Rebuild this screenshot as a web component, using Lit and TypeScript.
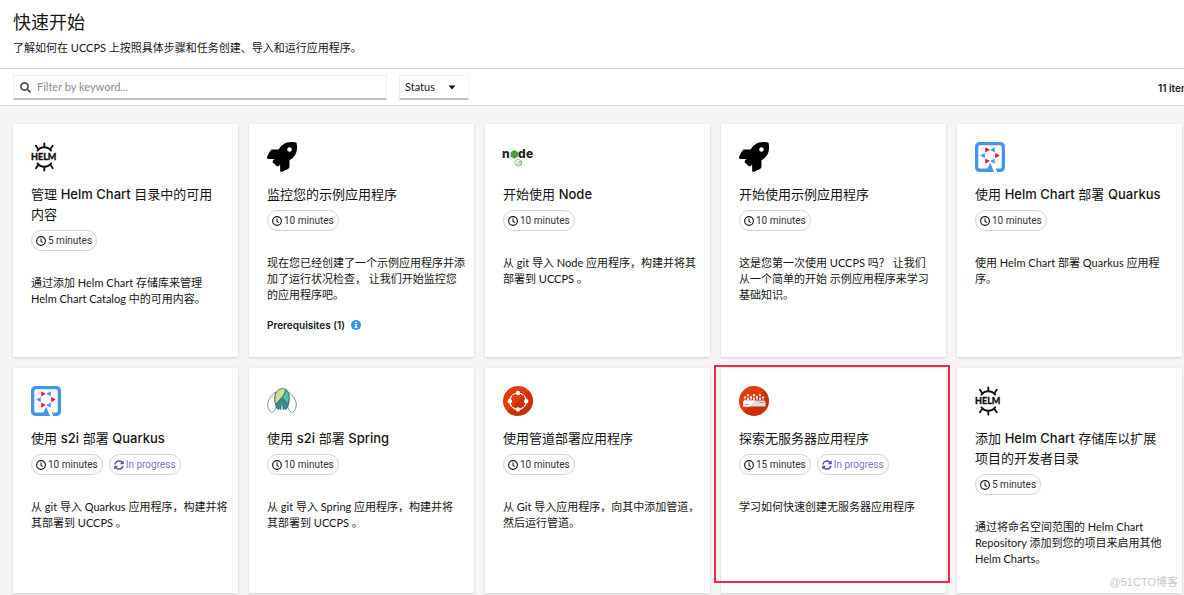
import { LitElement, html, css, svg, nothing } from "lit";
import { customElement, property } from "lit/decorators.js";

type IconName = "helm" | "rocket" | "node" | "quarkus" | "spring" | "pipeline" | "serverless";

interface QuickStart {
  icon: IconName;
  title: string;
  minutes: number;
  description: string;
  inProgress?: boolean;
  prerequisites?: number;
  marked?: boolean;
}

const quickStarts: QuickStart[] = [
  { icon: "helm", title: "管理 Helm Chart 目录中的可用\n内容", minutes: 5, description: "通过添加 Helm Chart 存储库来管理\nHelm Chart Catalog 中的可用内容。" },
  { icon: "rocket", title: "监控您的示例应用程序", minutes: 10, description: "现在您已经创建了一个示例应用程序并添\n加了运行状况检查， 让我们开始监控您\n的应用程序吧。", prerequisites: 1 },
  { icon: "node", title: "开始使用 Node", minutes: 10, description: "从 git 导入 Node 应用程序，构建并将其\n部署到 UCCPS 。" },
  { icon: "rocket", title: "开始使用示例应用程序", minutes: 10, description: "这是您第一次使用 UCCPS 吗？ 让我们\n从一个简单的开始 示例应用程序来学习\n基础知识。" },
  { icon: "quarkus", title: "使用 Helm Chart 部署 Quarkus", minutes: 10, description: "使用 Helm Chart 部署 Quarkus 应用程\n序。" },
  { icon: "quarkus", title: "使用 s2i 部署 Quarkus", minutes: 10, description: "从 git 导入 Quarkus 应用程序，构建并将\n其部署到 UCCPS 。", inProgress: true },
  { icon: "spring", title: "使用 s2i 部署 Spring", minutes: 10, description: "从 git 导入 Spring 应用程序，构建并将\n其部署到 UCCPS 。" },
  { icon: "pipeline", title: "使用管道部署应用程序", minutes: 10, description: "从 Git 导入应用程序，向其中添加管道，\n然后运行管道。" },
  { icon: "serverless", title: "探索无服务器应用程序", minutes: 15, description: "学习如何快速创建无服务器应用程序", inProgress: true, marked: true },
  { icon: "helm", title: "添加 Helm Chart 存储库以扩展\n项目的开发者目录", minutes: 5, description: "通过将命名空间范围的 Helm Chart\nRepository 添加到您的项目来启用其他\nHelm Charts。" },
];

const helmWheel = (transform: string) => svg`<path transform=${transform} d="M6.500 8.600C8 6.400 10.500 5.200 13.300 5.200S18.600 6.400 20.100 8.600M13.300 1.400V5M4.900 3.800L7.300 7.300M21.700 3.800L19.300 7.300" fill="none" stroke="#111" stroke-width="1.900" stroke-linecap="round"/>`;

const pipelineDots = [[15, 7], [15, 23.4], [6.8, 15.2], [23.2, 15.2]];
const serverlessTrees = [9, 15, 21];

const icons: Record<IconName, unknown> = {
  helm: svg`
    ${helmWheel("translate(0 0)")}
    ${helmWheel("translate(0 30) scale(1 -1)")}
    <text x="0" y="18" font-size="9" font-weight="900" font-family="Lato, sans-serif" fill="#111" stroke="#111" stroke-width=".3">HELM</text>`,
  rocket: svg`<path transform="scale(.0586)" d="M505.12 19.094c-1.189-5.531-6.658-11-12.207-12.188C460.716 0 435.507 0 410.407 0 307.175 0 245.269 55.203 199.052 128H94.838c-16.348.016-35.557 11.875-42.887 26.484L2.516 253.297A28.4 28.4 0 0 0 0 264a24.009 24.009 0 0 0 24.006 24H127.816l-22.475 22.469c-11.365 11.361-12.996 32.258 0 45.25L156.246 406.625c11.156 11.188 32.156 13.156 45.277 0l22.475-22.469V488a24.009 24.009 0 0 0 24.006 24 28.559 28.559 0 0 0 10.707-2.516l98.728-49.39c14.629-7.297 26.508-26.5 26.508-42.86V312.797c72.598-46.313 128.035-108.406 128.035-211.094C512.075 76.5 512.075 51.297 505.12 19.094ZM384.04 168A40 40 0 1 1 424.05 128 40.023 40.023 0 0 1 384.04 168Z"/>`,
  node: svg`
    <g font-family="Inter, sans-serif" font-weight="800" font-size="12" fill="#222">
      <text x="-1" y="16">n</text><text x="15" y="16">d</text><text x="23" y="16">e</text>
    </g>
    <path d="M11.400 8L15.200 10.200V14.600L11.400 16.800L7.600 14.600V10.200Z" fill="#4a9f3c"/>
    <path d="M15.300 17.200L18.500 19V22.600L15.300 24.400L12.100 22.600V19Z" fill="none" stroke="#7fb974" stroke-width=".8"/>
    <text x="13" y="23" font-family="Roboto, sans-serif" font-size="5" fill="#5fa853">JS</text>`,
  quarkus: svg`
    <path fill-rule="evenodd" fill="#4695eb" d="M4.500 0H25.500A4.500 4.500 0 0 1 30 4.500V25.500A4.500 4.500 0 0 1 25.500 30H22.300L20.700 26.600H25A1.800 1.800 0 0 0 26.700 25V5A1.800 1.800 0 0 0 25 3.300H5A1.800 1.800 0 0 0 3.300 5V25A1.800 1.800 0 0 0 5 26.600H12.300L15.200 20.800L19 30H4.500A4.500 4.500 0 0 1 0 25.500V4.500A4.500 4.500 0 0 1 4.500 0Z"/>
    <path fill="#ff004a" d="M10.300 5.200V10.400L14.800 7.800ZM20.200 11V16.200L24.700 13.600ZM10.300 16.500V21.700L14.800 19.100Z"/>
    <path fill="#4695eb" d="M19.700 5.200V10.400L15.200 7.800ZM9.800 11V16.200L5.300 13.600ZM19.700 16.500V21.700L15.200 19.100Z"/>`,
  spring: svg`
    <path fill="#fff" stroke="#5f8f8b" stroke-width=".9" d="M8.600 6C4.500 9 .8 14 .7 18.500C.6 22 3 26.500 4.700 26.500C6.500 26.500 9.300 22.500 9.300 20C7.500 16 7.500 10 8.600 6ZM21.400 6C25.500 9 29.200 14 29.300 18.500C29.400 22 27 26.500 25.300 26.500C23.500 26.500 20.700 22.500 20.700 20C22.500 16 22.500 10 21.400 6Z"/>
    <path fill="#d5dc96" stroke="#2f5f63" stroke-width=".8" d="M18.800 3.300C13 1 8 4.500 7.900 12.500C7.900 15 8.200 17 8.700 18.500L15 11.500C17 9 18.300 6.500 18.800 3.300Z"/>
    <path fill="#4fc0a5" stroke="#2f5f63" stroke-width=".8" d="M18.800 3.300C21.500 5 22.500 9.500 22.100 13.500C22 15.500 21.700 17.300 21.200 18.800L15 11.500C17 9 18.300 6.500 18.800 3.300Z"/>
    <path fill="#3a8f94" stroke="#2f5f63" stroke-width=".8" d="M15 11.500L21.200 18.800C20.800 20.700 20.200 22.200 19 23.500L17.300 22.500L16.200 23.700L15.800 19.500L15 18.500L14.200 19.500L13.800 23.700L12.700 22.500L11 23.500C9.800 22.200 9.200 20.700 8.700 18.500Z"/>`,
  pipeline: svg`
    <circle cx="15" cy="15" r="15" fill="#e33b0c"/>
    <path d="M25.600 4.400A15 15 0 0 1 4.400 25.600Z" fill="#cc2f05"/>
    <circle cx="15" cy="15.200" r="8.200" fill="none" stroke="#fff" stroke-width="1.200"/>
    ${pipelineDots.map(([x, y]) => svg`<circle cx=${x} cy=${y} r="2.200" fill="#fff"/>`)}
    <path d="M8.200 8.400l2 2M21.800 8.400l-2 2M8.200 22l2-2M21.800 22l-2-2" stroke="#d83407" stroke-width="1"/>`,
  serverless: svg`
    <circle cx="15" cy="15" r="15" fill="#e33b0c"/>
    <path d="M25.600 4.400A15 15 0 0 1 4.400 25.600Z" fill="#cc2f05"/>
    <path d="M5 14.500H25.500L26.500 16.500V20.500H4V16.500Z" fill="#ddd"/>
    <path d="M5 14.500H16.500L10 20.500H4V16.500Z" fill="#fff"/>
    <path d="M6 18.500h4M20.500 16.500h4" stroke="#8d8d8d" stroke-width=".8"/>
    ${serverlessTrees.map((x) => svg`
      <path d="M${x} 9V14M${x - 3} 11.500V14M${x + 3} 11.500V14" fill="none" stroke="#fff" stroke-width=".6"/>
      <circle cx=${x} cy="9" r="1.100" fill="#fff"/><circle cx=${x - 3} cy="11.300" r="1.100" fill="#fff"/><circle cx=${x + 3} cy="11.300" r="1.100" fill="#fff"/><circle cx=${x} cy="13" r="1" fill="#fff"/>`)}`,
};

const clockIcon = html`<svg class="glyph" viewBox="0 0 16 16" aria-hidden="true"><circle cx="8" cy="8" r="7" fill="none" stroke="#151515" stroke-width="1.800"/><path d="M8 3.800V8.300L10.700 10.600" fill="none" stroke="#151515" stroke-width="1.700"/></svg>`;
const syncIcon = html`<svg class="glyph" viewBox="0 0 512 512" aria-hidden="true"><path fill="#6753ac" d="M370.72 133.28C339.458 104.008 298.888 87.962 255.848 88c-77.458.068-144.328 53.178-162.791 126.85-1.344 5.363-6.122 9.150-11.651 9.150H24.103c-7.498 0-13.194-6.807-11.807-14.176C33.933 94.924 134.813 8 256 8c66.448 0 126.791 26.136 171.315 68.685L463.030 40.970C478.149 25.851 504 36.559 504 57.941V192c0 13.255-10.745 24-24 24H345.941c-21.382 0-32.090-25.851-16.971-40.971l41.750-41.749zM32 296h134.059c21.382 0 32.090 25.851 16.971 40.971l-41.750 41.750c31.262 29.273 71.835 45.319 114.876 45.280 77.418-.070 144.315-53.144 162.787-126.849 1.344-5.363 6.122-9.150 11.651-9.150h57.304c7.498 0 13.194 6.807 11.807 14.176C478.067 417.076 377.187 504 256 504c-66.448 0-126.791-26.136-171.315-68.685L48.970 471.030C33.851 486.149 8 475.441 8 454.059V320c0-13.255 10.745-24 24-24z"/></svg>`;
const infoIcon = html`<svg class="glyph" viewBox="0 0 10 10" aria-hidden="true"><circle cx="5" cy="5" r="5" fill="#2b9af3"/><path d="M4.200 1.700h1.600v1.500H4.200zM3.800 4h2v3h.6v1H3.700V7h.6V5h-.5z" fill="#fff"/></svg>`;

// Latin words in a title are set in medium weight, Chinese ones in regular.
const titleRuns = (title: string) =>
  title.split(/([A-Za-z0-9]+(?: [A-Za-z0-9]+)*)/).map((run, i) => (i % 2 ? html`<span class="latin">${run}</span>` : run));

@customElement("quick-start-card")
export class QuickStartCard extends LitElement {
  @property({ attribute: false }) item!: QuickStart;

  static styles = css`
    :host {
      position: relative;
      display: block;
      box-sizing: border-box;
      min-width: 0;
      padding: 18px 8px 24px 18px;
      background: #fff;
      box-shadow: 0 1px 2px rgba(3, 3, 3, 0.12), 0 0 2px rgba(3, 3, 3, 0.06);
    }
    .logo { display: block; width: 30px; height: 30px; overflow: visible; }
    .title {
      margin: 12px 0 0;
      font: 400 13px/20px Inter, "Noto Sans CJK SC", sans-serif;
      white-space: pre-line;
    }
    .latin { font-weight: 500; }
    .chips { display: flex; gap: 6px; margin-top: 6px; }
    .chip {
      display: flex;
      align-items: center;
      gap: 2px;
      height: 21px;
      box-sizing: border-box;
      padding: 0 4px;
      border: 1px solid #d2d2d2;
      border-radius: 11px;
      font: 10px/19px Roboto, sans-serif;
      color: #333;
      white-space: nowrap;
    }
    .progress { color: #8572c4; }
    .glyph { display: block; flex: none; width: 10px; height: 10px; }
    .description { margin: 24px 0 0; white-space: pre-line; }
    .prerequisites {
      display: flex;
      align-items: center;
      gap: 6px;
      margin-top: 14px;
      padding: 0;
      border: 0;
      background: none;
      color: inherit;
      font: 600 10px/16px Inter, sans-serif;
    }
    .mark {
      position: absolute;
      inset: -3px -4px 10px -7px;
      border: 2px solid #f5284b;
      pointer-events: none;
    }
  `;

  render() {
    const q = this.item;
    return html`
      <svg class="logo" viewBox="0 0 30 30" aria-hidden="true">${icons[q.icon]}</svg>
      <h2 class="title">${titleRuns(q.title)}</h2>
      <div class="chips">
        <span class="chip">${clockIcon}<span>${q.minutes} minutes</span></span>
        ${q.inProgress ? html`<span class="chip progress">${syncIcon}<span>In progress</span></span>` : nothing}
      </div>
      <p class="description">${q.description}</p>
      ${q.prerequisites ? html`<button class="prerequisites" type="button"><span>Prerequisites (${q.prerequisites})</span>${infoIcon}</button>` : nothing}
      ${q.marked ? html`<div class="mark"></div>` : nothing}
    `;
  }
}

@customElement("app-root")
export class AppRoot extends LitElement {
  static styles = css`
    :host {
      position: relative;
      display: block;
      min-height: 100vh;
      overflow: hidden;
      background: #f5f5f5;
      color: #151515;
      font: 11px/16px Lato, "Noto Sans CJK SC", sans-serif;
    }
    .header { padding: 9px 13px 12px; background: #fff; border-bottom: 1px solid #d8d8d8; }
    .heading { margin: 0; font-size: 18px; line-height: 26px; font-weight: 400; }
    .intro { margin: 5px 0 0; }
    .toolbar {
      display: flex;
      align-items: center;
      padding: 6px 0 5px 13px;
      background: #fff;
      border-bottom: 1px solid #dcdcdc;
    }
    .field {
      display: flex;
      align-items: center;
      box-sizing: border-box;
      height: 25px;
      border: 1px solid #f0f0f0;
      border-bottom: 2px solid #c0c0c0;
      background: #fff;
    }
    .search { width: 32%; min-width: 180px; max-width: 374px; flex: 1 1 auto; gap: 6px; padding: 0 6px; }
    .search-icon { flex: none; width: 11px; height: 11px; }
    .input {
      flex: 1;
      min-width: 0;
      padding: 0;
      border: 0;
      outline: 0;
      background: none;
      color: inherit;
      font: 11px/16px Lato, sans-serif;
    }
    .input::placeholder { color: #8a8d90; opacity: 1; }
    .status { position: relative; width: 70px; margin-left: 12px; }
    .select {
      appearance: none;
      width: 100%;
      height: 100%;
      padding: 0 20px 0 5px;
      border: 0;
      outline: 0;
      background: none;
      color: #151515;
      font: 11px/16px Lato, sans-serif;
    }
    .caret { position: absolute; right: 12px; width: 8px; height: 5px; pointer-events: none; }
    .count { margin-left: auto; width: 26px; font: 600 10px/16px Inter, sans-serif; white-space: nowrap; }
    .grid {
      display: grid;
      grid-template-columns: repeat(5, minmax(0, 1fr));
      grid-auto-rows: minmax(225px, auto);
      gap: 11px;
      padding: 18px 2px 2px 13px;
    }
    .watermark {
      position: absolute;
      right: 6px;
      bottom: 5px;
      color: #c8c8c8;
      font: 11px/16px "Liberation Sans", "Noto Sans CJK SC", sans-serif;
    }
  `;

  render() {
    return html`
      <header class="header">
        <h1 class="heading">快速开始</h1>
        <p class="intro">了解如何在 UCCPS 上按照具体步骤和任务创建、导入和运行应用程序。</p>
      </header>
      <div class="toolbar">
        <label class="field search">
          <svg class="search-icon" viewBox="0 0 512 512" aria-hidden="true"><path fill="#4f5255" d="M505 442.700L405.300 343c-4.500-4.500-10.600-7-17-7H372c27.600-35.300 44-79.700 44-128C416 93.100 322.900 0 208 0S0 93.100 0 208s93.100 208 208 208c48.300 0 92.700-16.400 128-44v16.300c0 6.400 2.500 12.500 7 17l99.700 99.700c9.400 9.400 24.600 9.400 33.900 0l28.300-28.300c9.400-9.400 9.400-24.600.1-34zM208 336c-70.700 0-128-57.200-128-128 0-70.700 57.200-128 128-128 70.700 0 128 57.200 128 128 0 70.700-57.200 128-128 128z"/></svg>
          <input class="input" type="text" placeholder="Filter by keyword..." aria-label="Filter by keyword">
        </label>
        <div class="field status">
          <select class="select" aria-label="Status"><option>Status</option></select>
          <svg class="caret" viewBox="0 0 8 5" aria-hidden="true"><path d="M.5.500h7L4 4.500z" fill="#151515"/></svg>
        </div>
        <span class="count">11 items</span>
      </div>
      <main class="grid">
        ${quickStarts.map((q) => html`<quick-start-card .item=${q}></quick-start-card>`)}
      </main>
      <div class="watermark">@51CTO博客</div>
    `;
  }
}
